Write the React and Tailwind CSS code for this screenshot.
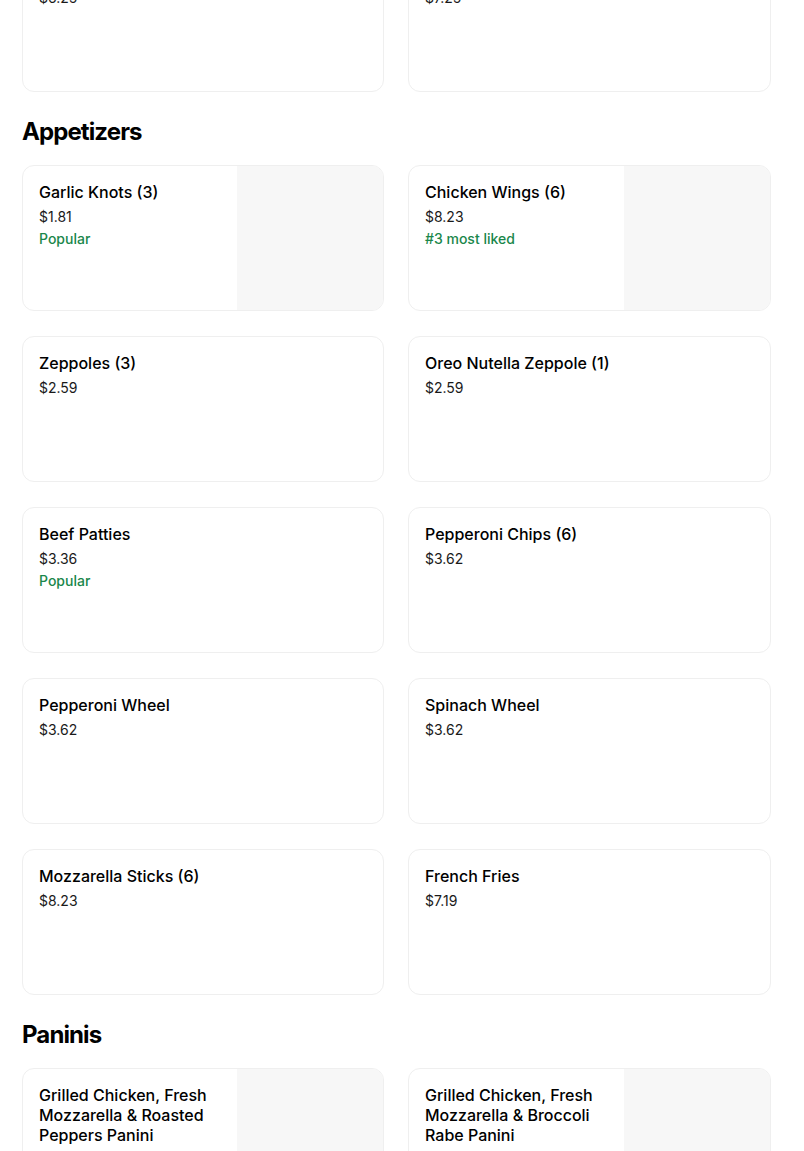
const partial = [
  { name: "Cheese Slice", price: "$6.25" },
  { name: "Sicilian Slice", price: "$7.25" },
];

const appetizers = [
  { name: "Garlic Knots (3)", price: "$1.81", tag: "Popular", img: true },
  { name: "Chicken Wings (6)", price: "$8.23", tag: "#3 most liked", img: true },
  { name: "Zeppoles (3)", price: "$2.59" },
  { name: "Oreo Nutella Zeppole (1)", price: "$2.59" },
  { name: "Beef Patties", price: "$3.36", tag: "Popular" },
  { name: "Pepperoni Chips (6)", price: "$3.62" },
  { name: "Pepperoni Wheel", price: "$3.62" },
  { name: "Spinach Wheel", price: "$3.62" },
  { name: "Mozzarella Sticks (6)", price: "$8.23" },
  { name: "French Fries", price: "$7.19" },
];

const paninis = [
  { name: "Grilled Chicken, Fresh Mozzarella & Roasted Peppers Panini", price: "$9.95", img: true },
  { name: "Grilled Chicken, Fresh Mozzarella & Broccoli Rabe Panini", price: "$9.95", img: true },
];

function ItemCard({ item }) {
  return (
    <div className="flex h-[146px] overflow-hidden rounded-xl border border-[#efefef] bg-white">
      <div className="flex-1 min-w-0 px-4 pt-4">
        <div className="text-[16px] leading-5 font-medium text-black">{item.name}</div>
        <div className="mt-[5px] text-[14px] leading-5 text-[#1a1a1a]">{item.price}</div>
        {item.tag && (
          <div className="mt-[2px] text-[14px] leading-5 font-medium text-[#1a874b]">{item.tag}</div>
        )}
      </div>
      {item.img && <div className="w-[146px] shrink-0 bg-[#f7f7f7]" />}
    </div>
  );
}

function Grid({ items }) {
  return (
    <div className="grid grid-cols-[362px_363px] gap-x-6 gap-y-[25px]">
      {items.map((item, i) => (
        <ItemCard key={i} item={item} />
      ))}
    </div>
  );
}

function SectionTitle({ children }) {
  return (
    <h2 className="mt-6 mb-[17px] h-8 text-[24px] leading-8 font-bold tracking-[-0.9px] text-black">
      {children}
    </h2>
  );
}

export default function App() {
  return (
    <div
      className="h-[1151px] overflow-hidden bg-white pl-[22px]"
      style={{ fontFamily: "Inter, 'Liberation Sans', sans-serif" }}
    >
      <div className="-mt-[54px]">
        <Grid items={partial} />
      </div>
      <SectionTitle>Appetizers</SectionTitle>
      <Grid items={appetizers} />
      <SectionTitle>Paninis</SectionTitle>
      <Grid items={paninis} />
    </div>
  );
}
